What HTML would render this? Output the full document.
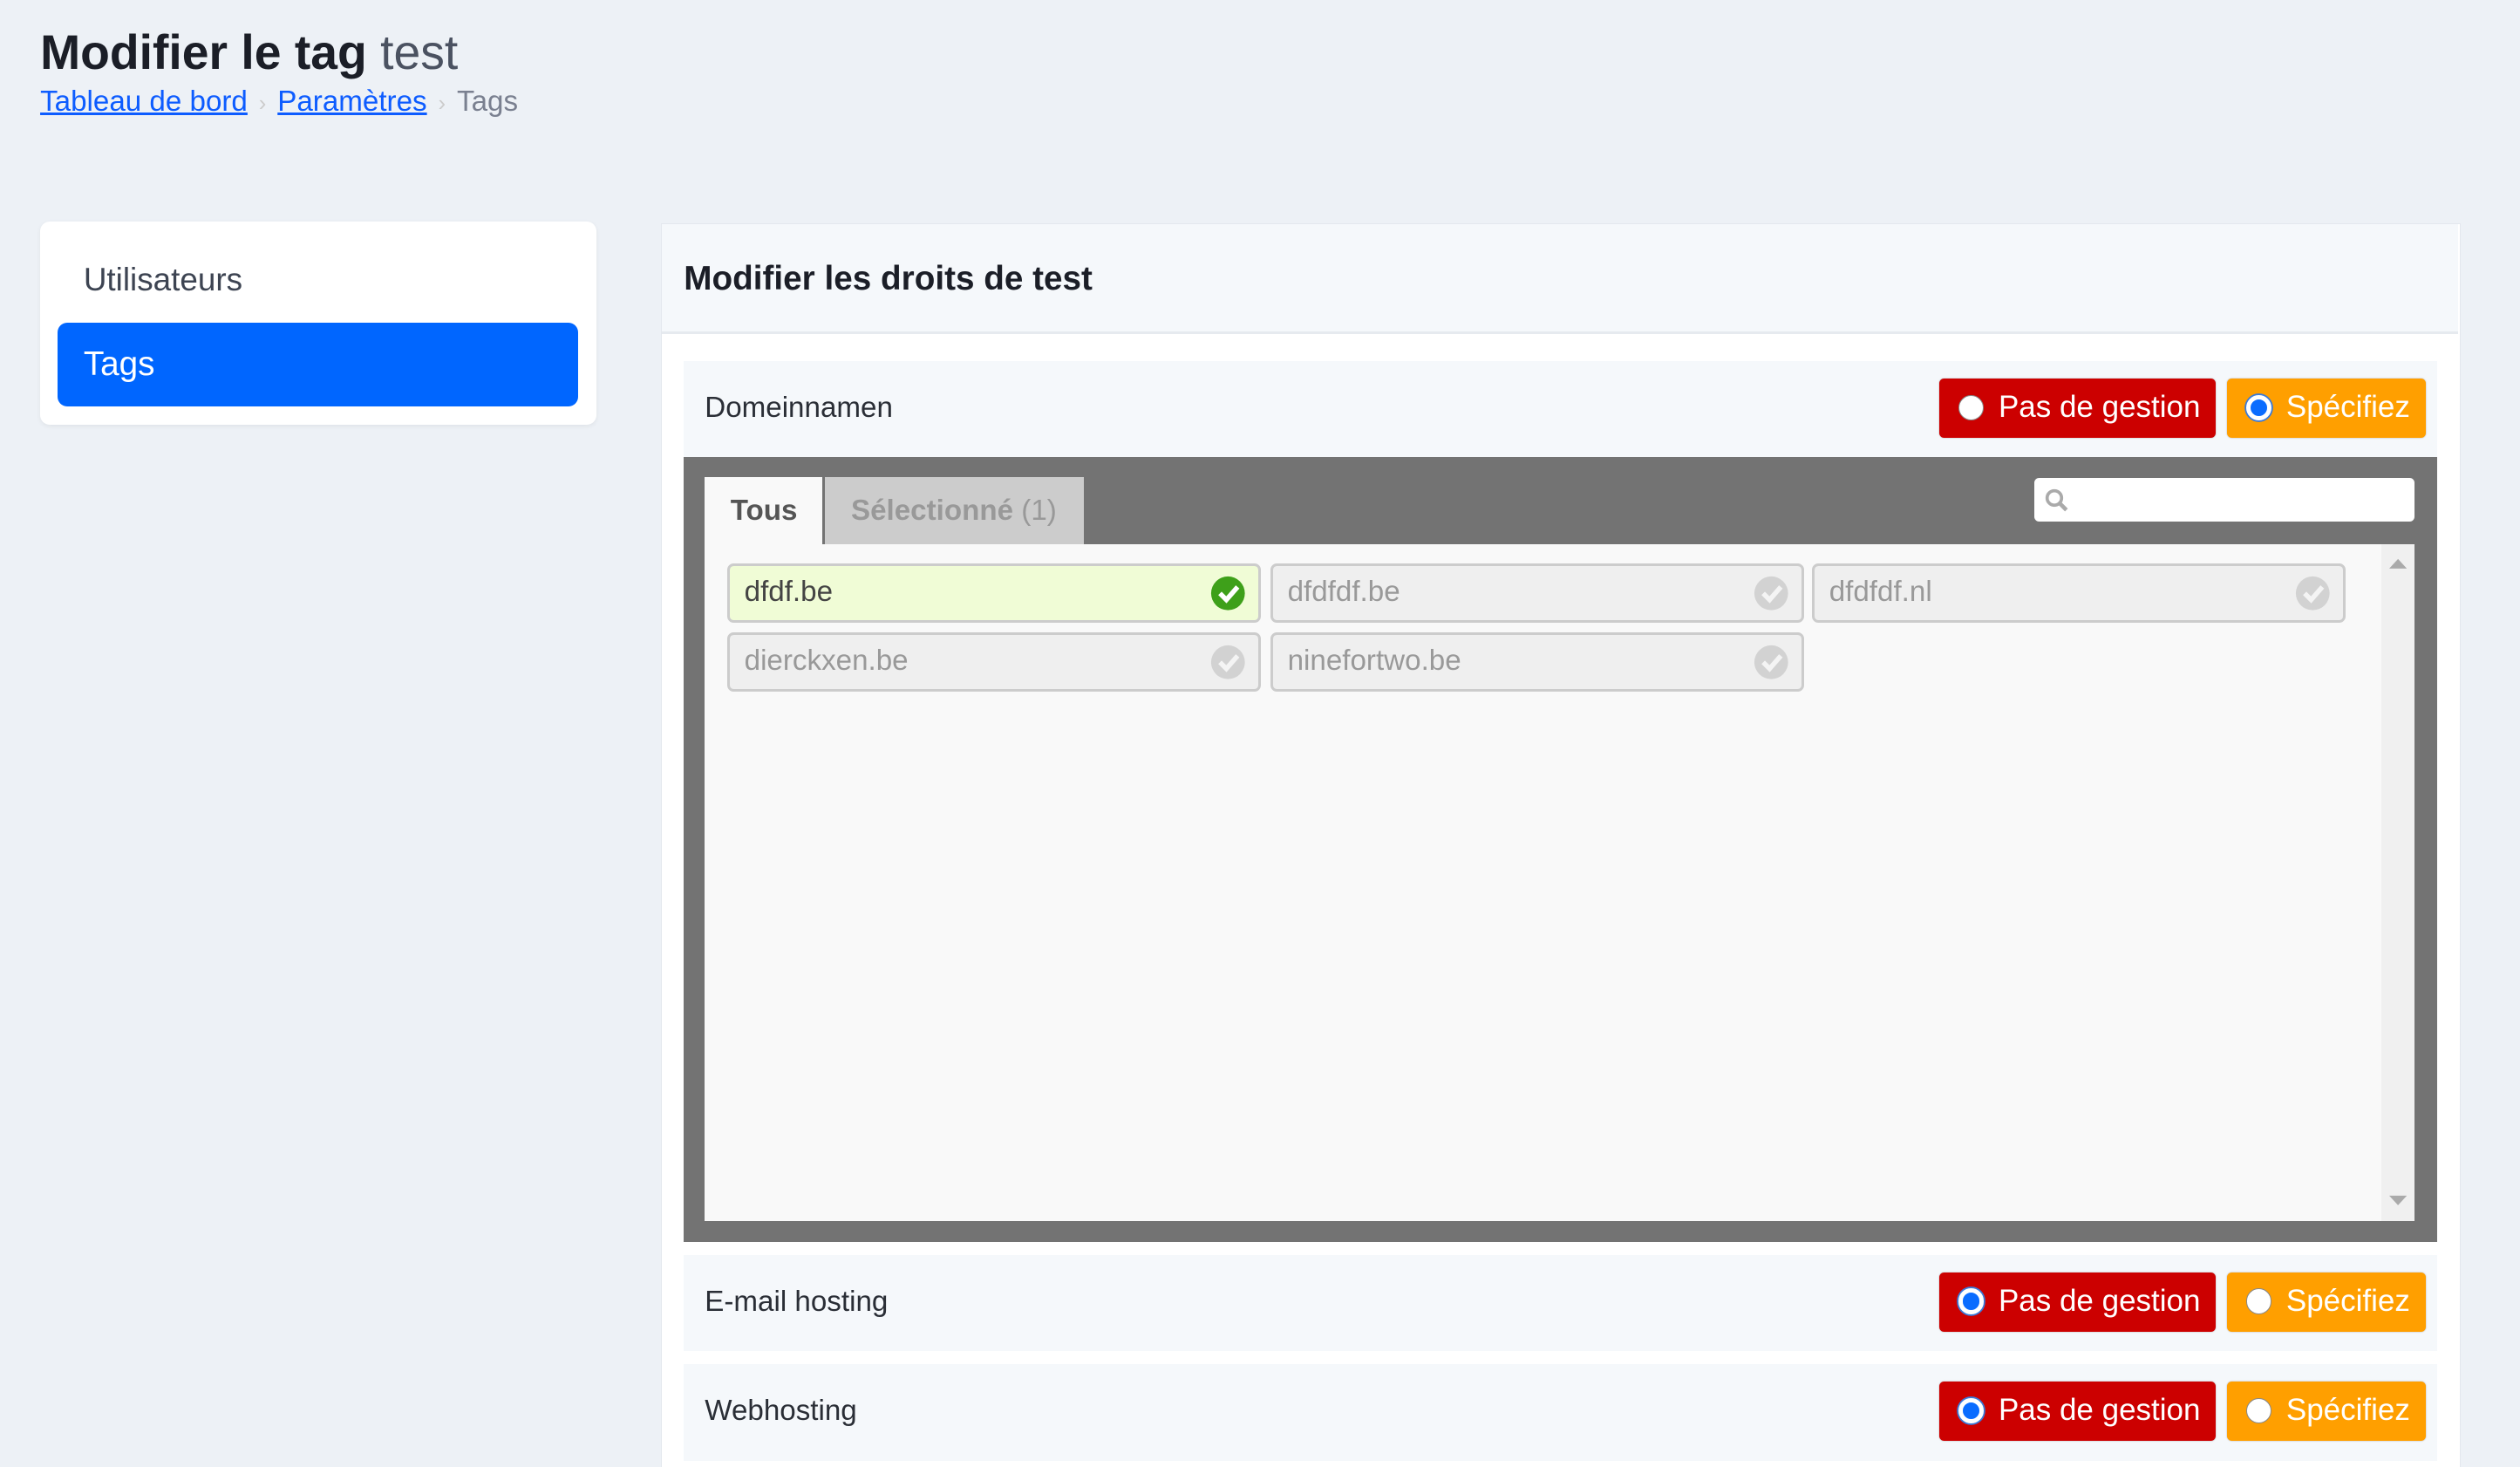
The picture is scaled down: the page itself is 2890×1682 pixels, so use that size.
<!DOCTYPE html>
<html><head><meta charset="utf-8"><style>
*{margin:0;padding:0;box-sizing:border-box}
html,body{width:2890px;height:1682px;overflow:hidden;background:#edf1f6;font-family:"Liberation Sans",sans-serif}
#w{zoom:1.8431;position:relative;width:1568px;height:913px}
.a{position:absolute}
.t{left:25px;top:15px;font-size:30px;font-weight:bold;color:#1b1e27;white-space:nowrap}
.t span{font-weight:normal;color:#4b5261}
.bc{left:25px;top:53px;font-size:18px;color:#7a8090;white-space:nowrap}
.bc a{color:#0d5cff;text-decoration:underline}
.bc i{font-style:normal;color:#ccc;margin:0 7px;font-size:14px}
.side{left:25px;top:138px;width:346px;height:126px;background:#fff;border-radius:6px;box-shadow:0 1px 3px rgba(0,0,0,.06)}
.u{left:27px;top:25px;font-size:20px;color:#3d4452}
.tg{left:11px;top:63px;width:324px;height:52px;background:#0066ff;border-radius:6px;color:#fff;font-size:21px;padding:14px 0 0 16px}
.main{left:411px;top:139px;width:1120px;height:780px;background:#fff;border:1px solid #e4e8ee}
.mh{left:0;top:0;width:1118px;height:68px;background:#f5f8fb;border-bottom:2px solid #e6eaef;font-size:21px;font-weight:bold;color:#1b1e27;padding:22px 0 0 14px}
.row{left:14px;width:1091px;height:60px;background:#f5f8fb;font-size:18px;color:#2a2e36}
.row .l{position:absolute;left:13px;top:19px}
.btn{position:absolute;top:11px;height:37px;border-radius:3px;color:#fff;font-size:19px;padding:7px 0 0 37px;box-shadow:0 0 1px rgba(0,0,0,.3)}
.red{left:781px;width:172px;background:#cc0000}
.org{left:960px;width:124px;background:#ff9f00}
.rd{position:absolute;left:12px;top:10px;width:16px;height:16px;border-radius:50%;background:#fff;border:1px solid #888}
.rd.on{background:#0a6cff;border:3px solid #fff;box-shadow:0 0 0 1px #3a7ad9}
.dark{left:14px;top:145px;width:1091px;height:488px;background:#737373}
.tab1{left:13px;top:12px;width:73px;height:42px;background:#f9f9f9;font-size:18px;font-weight:bold;color:#555;padding:11px 0 0 16px}
.tab2{left:88px;top:12px;width:161px;height:42px;background:#ccc;font-size:18px;font-weight:bold;color:#999;padding:11px 0 0 16px;white-space:nowrap}
.tab2 span{font-weight:normal}
.srch{left:840px;top:13px;width:237px;height:27px;background:#fff;border-radius:3px}
.cont{left:13px;top:54px;width:1064px;height:421px;background:#f9f9f9}
.sb{right:0;top:0;width:21px;height:421px;background:#f0f0f0}
.it{position:absolute;width:332px;height:37px;background:#efefef;border:2px solid #ccc;border-radius:4px;font-size:18px;color:#999;padding:6px 0 0 9px}
.it.sel{background:#f0fcd6;color:#444}
.ck{position:absolute;right:8px;top:6px}
</style></head><body><div id="w">
<div class="a t">Modifier le tag <span>test</span></div>
<div class="a bc"><a>Tableau de bord</a><i>›</i><a>Paramètres</a><i>›</i>Tags</div>
<div class="a side"><div class="a u">Utilisateurs</div><div class="a tg">Tags</div></div>
<div class="a main">
<div class="a mh">Modifier les droits de test</div>
<div class="a row" style="top:85px"><div class="l">Domeinnamen</div>
<div class="btn red"><div class="rd"></div>Pas de gestion</div>
<div class="btn org"><div class="rd on"></div>Spécifiez</div></div>
<div class="a dark">
<div class="a tab1">Tous</div>
<div class="a tab2">Sélectionné <span>(1)</span></div>
<div class="a srch"><svg class="a" style="left:6px;top:6px" width="16" height="16" viewBox="0 0 16 16"><circle cx="6.5" cy="6.5" r="4.5" fill="none" stroke="#aaa" stroke-width="2"/><path d="M10 10l4 4" stroke="#aaa" stroke-width="2.5"/></svg></div>
<div class="a cont">
<div class="a sb"><svg class="a" style="left:5px;top:8px" width="11" height="8"><path d="M0 7L5.5 1 11 7z" fill="#aaa"/></svg><svg class="a" style="left:5px;top:404px" width="11" height="8"><path d="M0 1L5.5 7 11 1z" fill="#aaa"/></svg></div>
<div class="it sel" style="left:14px;top:12px">dfdf.be<svg class="ck" width="22" height="22" viewBox="0 0 22 22"><circle cx="11" cy="11" r="10.5" fill="#3ea01a"/><path d="M6 11l4 4 7-8" fill="none" stroke="#fff" stroke-width="3"/></svg></div>
<div class="it" style="left:352px;top:12px">dfdfdf.be<svg class="ck" width="22" height="22" viewBox="0 0 22 22"><circle cx="11" cy="11" r="10.5" fill="#d2d2d2"/><path d="M6 11l4 4 7-8" fill="none" stroke="#f4f4f4" stroke-width="3"/></svg></div>
<div class="it" style="left:689px;top:12px">dfdfdf.nl<svg class="ck" width="22" height="22" viewBox="0 0 22 22"><circle cx="11" cy="11" r="10.5" fill="#d2d2d2"/><path d="M6 11l4 4 7-8" fill="none" stroke="#f4f4f4" stroke-width="3"/></svg></div>
<div class="it" style="left:14px;top:55px">dierckxen.be<svg class="ck" width="22" height="22" viewBox="0 0 22 22"><circle cx="11" cy="11" r="10.5" fill="#d2d2d2"/><path d="M6 11l4 4 7-8" fill="none" stroke="#f4f4f4" stroke-width="3"/></svg></div>
<div class="it" style="left:352px;top:55px">ninefortwo.be<svg class="ck" width="22" height="22" viewBox="0 0 22 22"><circle cx="11" cy="11" r="10.5" fill="#d2d2d2"/><path d="M6 11l4 4 7-8" fill="none" stroke="#f4f4f4" stroke-width="3"/></svg></div>
</div></div>
<div class="a row" style="top:641px"><div class="l">E-mail hosting</div>
<div class="btn red"><div class="rd on"></div>Pas de gestion</div>
<div class="btn org"><div class="rd"></div>Spécifiez</div></div>
<div class="a row" style="top:709px"><div class="l">Webhosting</div>
<div class="btn red"><div class="rd on"></div>Pas de gestion</div>
<div class="btn org"><div class="rd"></div>Spécifiez</div></div>
</div>
</div></body></html>
